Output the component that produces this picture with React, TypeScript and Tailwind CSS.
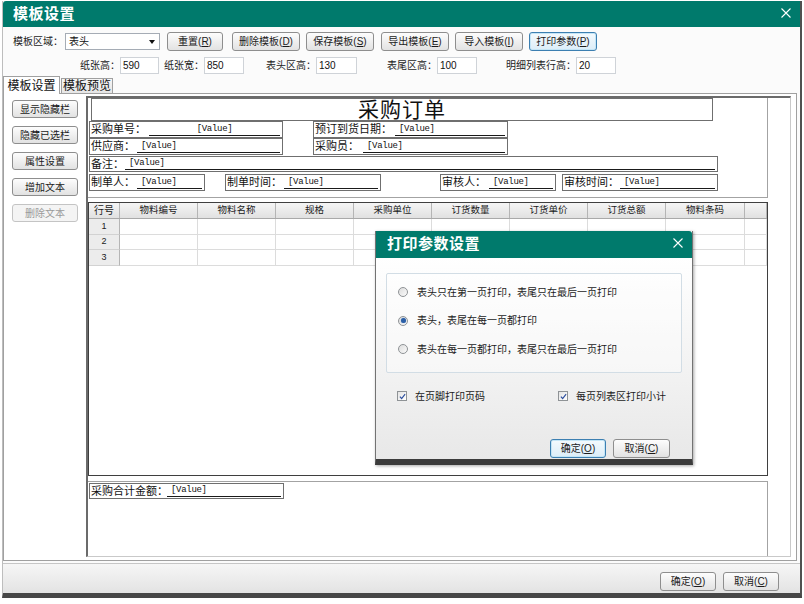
import React from "react";

const font = "font-['Liberation_Sans','Noto_Sans_CJK_SC',sans-serif]";
const mono = "font-['Liberation_Mono','Noto_Sans_CJK_SC',monospace]";

function Key({ k }: { k: string }) {
  return (
    <>
      (<span className="underline">{k}</span>)
    </>
  );
}

function Btn({ text, k, cls, focus }: { text: string; k: string; cls: string; focus?: boolean }) {
  return (
    <div
      className={`h-[19px] shrink-0 flex items-center justify-center rounded-[3px] border text-[10px] text-[#1b1b1b] ${
        focus
          ? "border-[#3c7fb1] shadow-[inset_0_0_0_1px_#c4e5f6] bg-linear-to-b from-[#f4fafd] to-[#dcedf8]"
          : "border-[#8e8e8e] bg-linear-to-b from-[#fdfdfd] to-[#e2e2e2]"
      } ${cls}`}
    >
      {text}
      <Key k={k} />
    </div>
  );
}

function SideBtn({ text, disabled }: { text: string; disabled?: boolean }) {
  return (
    <div
      className={`w-[66px] h-[18px] flex items-center justify-center rounded-[3px] border text-[10px] ${
        disabled
          ? "border-[#c4c4c4] bg-[#f4f4f4] text-[#9a9a9a]"
          : "border-[#8e8e8e] bg-linear-to-b from-[#fdfdfd] to-[#e2e2e2] text-[#1b1b1b]"
      }`}
    >
      {text}
    </div>
  );
}

function Input({ value, cls }: { value: string; cls: string }) {
  return (
    <div className={`h-[17px] shrink-0 bg-white border border-[#cfd3d8] flex items-center pl-[2px] text-[10px] text-[#111] ${cls}`}>
      {value}
    </div>
  );
}

function Field({
  label,
  pos,
  lw,
  center,
}: {
  label: string;
  pos: string;
  lw: string;
  center?: boolean;
}) {
  return (
    <div className={`absolute flex border border-[#6f6f6f] bg-white ${pos}`}>
      <span className={`shrink-0 flex items-center pl-[1px] text-[11px] leading-none text-[#111] whitespace-nowrap ${lw}`}>
        {label}
      </span>
      <div
        className={`flex-1 mr-[2px] mb-[1px] border-b border-[#1a1a1a] flex items-end pb-[1px] ${
          center ? "justify-center" : "pl-[4px]"
        }`}
      >
        <span className={`${mono} text-[9px] tracking-[-0.3px] leading-none text-[#111]`}>[Value]</span>
      </div>
    </div>
  );
}

function CloseX({ cls }: { cls: string }) {
  return (
    <svg viewBox="0 0 10 10" className={cls}>
      <path d="M0.5 0.5 L9.5 9.5 M9.5 0.5 L0.5 9.5" stroke="white" strokeWidth="1.1" fill="none" />
    </svg>
  );
}

function Radio({ checked, text }: { checked?: boolean; text: string }) {
  return (
    <div className="flex items-center h-[12px]">
      <span className="w-[10px] h-[10px] rounded-full border border-[#8f9396] bg-linear-to-br from-[#dcdcdc] to-[#fbfbfb] flex items-center justify-center">
        {checked && <span className="w-[5px] h-[5px] rounded-full bg-[#2c5fa6] shadow-[0_0_1px_#6a9bd8]" />}
      </span>
      <span className="ml-[9px] text-[10px] text-[#1b1b1b]">{text}</span>
    </div>
  );
}

function Check({ text, cls }: { text: string; cls?: string }) {
  return (
    <div className={`flex items-center h-[12px] ${cls ?? ""}`}>
      <span className="w-[10px] h-[10px] border border-[#8f9396] bg-linear-to-br from-[#e4e4e4] to-white flex items-center justify-center">
        <svg viewBox="0 0 8 8" className="w-[7px] h-[7px]">
          <path d="M1 4.2 L3 6.3 L7 1.3" stroke="#2d4f9e" strokeWidth="1.3" fill="none" />
        </svg>
      </span>
      <span className="ml-[8px] text-[10px] text-[#1b1b1b]">{text}</span>
    </div>
  );
}

const cols = [
  { w: "w-[31px]", t: "行号" },
  { w: "w-[78px]", t: "物料编号" },
  { w: "w-[78px]", t: "物料名称" },
  { w: "w-[78px]", t: "规格" },
  { w: "w-[78px]", t: "采购单位" },
  { w: "w-[78px]", t: "订货数量" },
  { w: "w-[78px]", t: "订货单价" },
  { w: "w-[78px]", t: "订货总额" },
  { w: "w-[79px]", t: "物料条码" },
  { w: "flex-1", t: "" },
];

const rows = [
  { n: "1", h: "h-[16px]" },
  { n: "2", h: "h-[15px]" },
  { n: "3", h: "h-[16px]" },
];

export default function App() {
  return (
    <div className={`relative w-[804px] h-[604px] bg-white overflow-hidden ${font}`}>
      {/* main window */}
      <div className="ml-[2px] mt-[1px] w-[800px] h-[597px] flex flex-col border-l border-l-[#bdbdbd] border-r-2 border-r-[#505050] border-b-[5px] border-b-[#474747] bg-[#fbfbfb]">
        <div className="h-[26px] shrink-0 bg-[#007a6c] flex items-center justify-between pl-[10px] pr-[9px] rounded-tl-[3px]">
          <span className="text-white text-[15px] font-bold tracking-[0.5px]">模板设置</span>
          <CloseX cls="w-[10px] h-[10px] mb-[3px]" />
        </div>

        {/* toolbar row 1 */}
        <div className="mt-[5px] h-[19px] flex items-center pl-[10px]">
          <span className="w-[52px] shrink-0 text-[10px] text-[#1b1b1b]">模板区域：</span>
          <div className="w-[95px] h-[17px] shrink-0 bg-white border border-[#a5acb5] flex items-center justify-between pl-[3px] pr-[4px]">
            <span className="text-[10px] text-[#111]">表头</span>
            <span className="w-0 h-0 border-x-[3px] border-x-transparent border-t-[4px] border-t-[#111]" />
          </div>
          <Btn text="重置" k="R" cls="w-[56px] ml-[7px]" />
          <Btn text="删除模板" k="D" cls="w-[68px] ml-[9px]" />
          <Btn text="保存模板" k="S" cls="w-[68px] ml-[6px]" />
          <Btn text="导出模板" k="E" cls="w-[68px] ml-[7px]" />
          <Btn text="导入模板" k="I" cls="w-[68px] ml-[6px]" />
          <Btn text="打印参数" k="P" cls="w-[68px] ml-[6px]" focus />
        </div>

        {/* toolbar row 2 */}
        <div className="mt-[6px] h-[17px] flex items-center text-[10px] text-[#1b1b1b]">
          <span className="w-[117px] shrink-0 text-right">纸张高：</span>
          <Input value="590" cls="w-[39px]" />
          <span className="w-[45px] shrink-0 text-right">纸张宽：</span>
          <Input value="850" cls="w-[40px]" />
          <span className="w-[72px] shrink-0 text-right">表头区高：</span>
          <Input value="130" cls="w-[41px]" />
          <span className="w-[80px] shrink-0 text-right">表尾区高：</span>
          <Input value="100" cls="w-[40px]" />
          <span className="w-[99px] shrink-0 text-right">明细列表行高：</span>
          <Input value="20" cls="w-[40px]" />
        </div>

        {/* tabs */}
        <div className="mt-[2px] h-[17px] flex items-end">
          <div className="w-[57px] h-[18px] -mb-[1px] z-10 bg-white border border-b-0 border-[#a0a0a0] flex items-center justify-center text-[12px] text-[#111]">
            模板设置
          </div>
          <div className="w-[52px] h-[15px] ml-[1px] bg-linear-to-b from-[#f6f6f6] to-[#e6e6e6] border border-b-0 border-[#a0a0a0] flex items-center justify-center text-[12px] text-[#111]">
            模板预览
          </div>
        </div>

        {/* tab page */}
        <div className="w-[794px] h-[468px] shrink-0 bg-white border border-[#a0a0a0] flex">
          <div className="pl-[8px] pt-[6px] flex flex-col gap-[8px]">
            <SideBtn text="显示隐藏栏" />
            <SideBtn text="隐藏已选栏" />
            <SideBtn text="属性设置" />
            <SideBtn text="增加文本" />
            <SideBtn text="删除文本" disabled />
          </div>

          {/* design area */}
          <div className="ml-[8px] mt-[2px] w-[705px] h-[461px] border-l-2 border-t-2 border-l-[#6b6b6b] border-t-[#6b6b6b] border-r border-b border-r-[#c9c9c9] border-b-[#c9c9c9] flex flex-col">
            {/* header band */}
            <div className="relative w-[680px] h-[100px] shrink-0 border-r border-b border-[#a3a3a3]">
              <div className="absolute left-[3px] top-[0px] w-[622px] h-[23px] border border-[#6f6f6f] flex items-center justify-center">
                <span className="text-[21px] leading-none text-[#111] tracking-[1px]">采购订单</span>
              </div>
              <Field label="采购单号：" pos="left-[1px] top-[23px] w-[194px] h-[17px]" lw="w-[59px]" center />
              <Field label="预订到货日期：" pos="left-[225px] top-[23px] w-[195px] h-[17px]" lw="w-[81px]" />
              <Field label="供应商：" pos="left-[1px] top-[40px] w-[194px] h-[17px]" lw="w-[47px]" />
              <Field label="采购员：" pos="left-[225px] top-[40px] w-[195px] h-[17px]" lw="w-[49px]" />
              <Field label="备注：" pos="left-[1px] top-[58px] w-[629px] h-[16px]" lw="w-[35px]" />
              <Field label="制单人：" pos="left-[1px] top-[76px] w-[116px] h-[17px]" lw="w-[47px]" />
              <Field label="制单时间：" pos="left-[137px] top-[76px] w-[156px] h-[17px]" lw="w-[58px]" />
              <Field label="审核人：" pos="left-[352px] top-[76px] w-[116px] h-[17px]" lw="w-[48px]" />
              <Field label="审核时间：" pos="left-[474px] top-[76px] w-[156px] h-[17px]" lw="w-[57px]" />
            </div>

            {/* detail table */}
            <div className="mt-[4px] w-[680px] h-[274px] shrink-0 border border-[#3f3f3f] flex flex-col">
              <div className="h-[16px] flex bg-linear-to-b from-[#f5f5f5] to-[#e1e1e1] border-b border-[#a9a9a9]">
                {cols.map((c, i) => (
                  <div
                    key={i}
                    className={`${c.w} shrink-0 border-r border-[#b5b5b5] flex items-center justify-center text-[9.5px] text-[#1b1b1b] ${
                      i === 0 ? "text-[10px]" : ""
                    }`}
                  >
                    {c.t}
                  </div>
                ))}
              </div>
              {rows.map((r) => (
                <div key={r.n} className={`${r.h} flex`}>
                  {cols.map((c, i) =>
                    i === 0 ? (
                      <div
                        key={i}
                        className="w-[31px] shrink-0 bg-[#ececec] border-r border-b border-r-[#b5b5b5] border-b-[#d2d2d2] flex items-center justify-center text-[9px] text-[#222]"
                      >
                        {r.n}
                      </div>
                    ) : (
                      <div key={i} className={`${c.w} shrink-0 border-r border-b border-[#dcdcdc]`} />
                    )
                  )}
                </div>
              ))}
            </div>

            {/* footer band */}
            <div className="relative mt-[5px] w-[680px] h-[75px] shrink-0 border-t border-r border-[#a3a3a3]">
              <Field label="采购合计金额：" pos="left-[1px] top-[1px] w-[195px] h-[16px]" lw="w-[77px]" />
            </div>
          </div>
        </div>

        {/* bottom bar */}
        <div className="mt-[2px] h-[30px] shrink-0 border-t border-[#c6c6c6] bg-linear-to-b from-[#f6f6f6] to-[#e3e3e3] flex justify-end items-start pt-[8px] pr-[21px] gap-[7px]">
          <Btn text="确定" k="O" cls="w-[56px] h-[18px]" />
          <Btn text="取消" k="C" cls="w-[56px] h-[18px]" />
        </div>
      </div>

      {/* print settings dialog */}
      <div className="absolute left-[375px] top-[231px] w-[318px] h-[234px] flex flex-col border-x border-x-[#737373] border-b-[6px] border-b-[#3b3b3b] shadow-[1px_1px_3px_rgba(0,0,0,0.35)]">
        <div className="h-[27px] shrink-0 bg-[#007a6c] flex items-center justify-between pl-[11px] pr-[9px] rounded-tr-[3px]">
          <span className="text-white text-[15px] font-bold tracking-[0.5px]">打印参数设置</span>
          <CloseX cls="w-[10px] h-[10px] mb-[3px]" />
        </div>
        <div className="flex-1 bg-linear-to-b from-white to-[#e8e8e8] px-[10px] pt-[15px] flex flex-col">
          <div className="h-[100px] border border-[#d2dde5] rounded-[2px] bg-white/40 pl-[11px] pt-[12px] flex flex-col gap-[16.5px]">
            <Radio text="表头只在第一页打印，表尾只在最后一页打印" />
            <Radio checked text="表头，表尾在每一页都打印" />
            <Radio text="表头在每一页都打印，表尾只在最后一页打印" />
          </div>
          <div className="mt-[17px] pl-[11px] flex">
            <Check text="在页脚打印页码" cls="w-[161px]" />
            <Check text="每页列表区打印小计" />
          </div>
          <div className="mt-[37px] flex justify-end gap-[7px] pr-[12px]">
            <Btn text="确定" k="O" cls="w-[56px] h-[18px]" focus />
            <Btn text="取消" k="C" cls="w-[57px] h-[18px]" />
          </div>
        </div>
      </div>
    </div>
  );
}
